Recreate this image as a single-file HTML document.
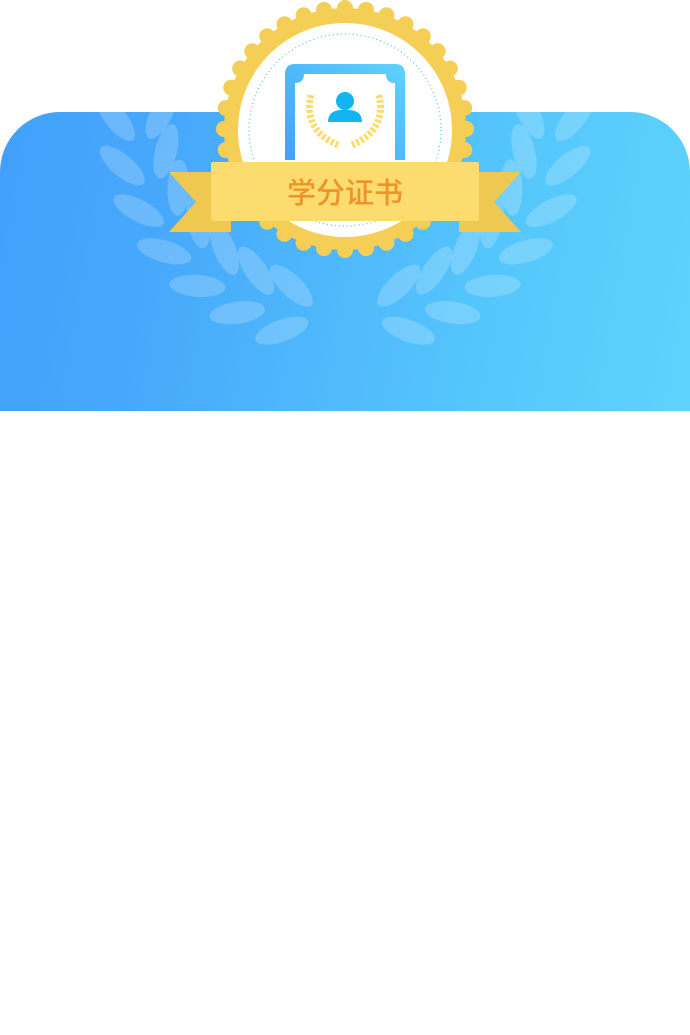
<!DOCTYPE html>
<html><head><meta charset="utf-8"><style>
html,body{margin:0;padding:0;background:#fff;width:690px;height:1035px;overflow:hidden}
.panel{position:absolute;left:0;top:112px;width:690px;height:299px;border-radius:60px 60px 0 0;background:linear-gradient(100deg,#42a0fb 0%,#47a9fb 25%,#55c6fc 70%,#5dd3fd 100%)}
svg{position:absolute;left:0;top:0}
.t{font-family:"Liberation Sans","Noto Sans CJK SC",sans-serif;font-weight:500}
</style></head><body>
<div class="panel"></div>
<svg width="690" height="420" viewBox="0 0 690 420">
<defs>
<g id="lp" fill="#fff" fill-opacity="0.2">
<ellipse cx="574" cy="94" rx="28" ry="11" transform="rotate(-58 574 94)"/>
<ellipse cx="528" cy="94" rx="28" ry="11" transform="rotate(-122 528 94)"/>
</g>
<g id="side">
<use href="#lp" transform="rotate(-6 345 110)"/>
<use href="#lp" transform="rotate(6 345 110)"/>
<use href="#lp" transform="rotate(18 345 110)"/>
<use href="#lp" transform="rotate(30 345 110)"/>
<use href="#lp" transform="rotate(42 345 110)"/>
<use href="#lp" transform="rotate(54 345 110)"/>
<use href="#lp" transform="rotate(66 345 110)"/>
<use href="#lp" transform="rotate(78 345 110)"/>
</g>
<clipPath id="pc"><rect x="0" y="112" width="690" height="300"/></clipPath>
<linearGradient id="sg" x1="0" x2="1" y1="1" y2="0"><stop offset="0" stop-color="#42a0fb"/><stop offset="1" stop-color="#5dd3fd"/></linearGradient>
</defs>
<g clip-path="url(#pc)">
<use href="#side"/>
<use href="#side" transform="translate(690 0) scale(-1 1)"/>
</g>
<g fill="#f5cf55">
<circle cx="345" cy="129" r="121"/>
<g id="bumps">
<circle cx="345" cy="8" r="8"/>
<circle cx="345" cy="8" r="8" transform="rotate(10 345 129)"/>
<circle cx="345" cy="8" r="8" transform="rotate(20 345 129)"/>
<circle cx="345" cy="8" r="8" transform="rotate(30 345 129)"/>
<circle cx="345" cy="8" r="8" transform="rotate(40 345 129)"/>
<circle cx="345" cy="8" r="8" transform="rotate(50 345 129)"/>
</g>
<use href="#bumps" transform="rotate(60 345 129)"/>
<use href="#bumps" transform="rotate(120 345 129)"/>
<use href="#bumps" transform="rotate(180 345 129)"/>
<use href="#bumps" transform="rotate(240 345 129)"/>
<use href="#bumps" transform="rotate(300 345 129)"/>
</g>
<circle cx="345" cy="130" r="107" fill="#fff"/>
<circle cx="345" cy="130" r="96" fill="none" stroke="#4cc0f0" stroke-width="1.2" stroke-dasharray="1 3"/>
<path d="M285 74 Q285 64 295 64 L395 64 Q405 64 405 74 L405 160 L285 160 Z" fill="url(#sg)"/>
<path d="M304 74 L386 74 Q386 83 395 83 L395 165 L295 165 L295 83 Q304 83 304 74 Z" fill="#fff"/>
<circle cx="345" cy="101" r="9" fill="#12b5f1"/>
<path d="M328 122 Q328 109 345 110 Q362 109 362 122 Z" fill="#12b5f1"/>
<path d="M311 95 Q303 130 338 145 M379 95 Q387 130 352 145" fill="none" stroke="#fddc6f" stroke-width="7" stroke-dasharray="3 2"/>
<path d="M169 172 L231 172 L231 232 L169 232 L196 202 Z" fill="#eec850"/>
<path d="M521 172 L459 172 L459 232 L521 232 L494 202 Z" fill="#eec850"/>
<rect x="211" y="162" width="268" height="59" rx="2" fill="#fddc6f"/>
<text x="345" y="203" text-anchor="middle" font-size="29" fill="#ef9229" class="t">学分证书</text>
</svg>
</body></html>
